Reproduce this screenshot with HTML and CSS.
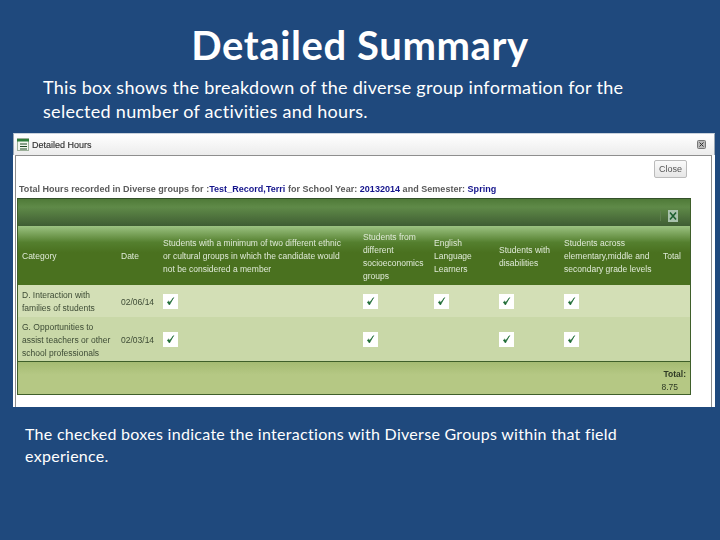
FILE: index.html
```
<!DOCTYPE html>
<html lang="en">
<head>
<meta charset="utf-8">
<title>Detailed Summary</title>
<link rel="stylesheet" href="styles.css">
</head>
<body>
<svg class="defs" width="0" height="0" aria-hidden="true"><symbol id="tick" viewBox="0 0 15 15"><path d="M4.4 8.2 6.4 11 10.6 3.6 6.9 8.4 5.6 7.2z" fill="#1c6a33" stroke="#1c6a33" stroke-width=".7"/></symbol></svg>
<h1 class="title">Detailed Summary</h1>
<p class="intro">This box shows the breakdown of the diverse group information for the selected number of activities and hours.</p>
<section class="shot">
  <header class="titlebar">
    <svg class="app-icon" width="14" height="14" viewBox="0 0 14 14"><rect x=".5" y=".5" width="11" height="12" fill="#f2f6ee" stroke="#9db09a"/><path d="M0 1h12v2.5H0z" fill="#2f7d3a"/><path d="M3 6h7M3 8.5h7M3 11h7" stroke="#1f4a25"/></svg>
    <span class="window-name">Detailed Hours</span>
    <svg class="x-icon" width="9" height="9" viewBox="0 0 9 9"><rect x=".5" y=".5" width="8" height="8" rx="1" fill="#b9b9b9" stroke="#777"/><path d="M2.5 2.5l4 4M6.5 2.5l-4 4" stroke="#333"/></svg>
  </header>
  <div class="content">
    <div class="close-row"><button class="close">Close</button></div>
    <div class="summary">Total Hours recorded in Diverse groups for :<b>Test_Record,Terri</b> for School Year: <b>20132014</b> and Semester: <b>Spring</b></div>
    <div class="grid-wrap">
      <div class="toolbar">
        <span class="sep"></span>
        <svg width="10" height="12" viewBox="0 0 10 12"><rect width="10" height="12" fill="#a9c2ad"/><path d="M2 2.5l6 7M8 2.5l-6 7" stroke="#1d5f30" stroke-width="1.6"/></svg>
      </div>
      <div class="row head">
        <div>Category</div><div>Date</div>
        <div class="wide">Students with a minimum of two different ethnic or cultural groups in which the candidate would not be considered a member</div>
        <div>Students from different socioeconomics groups</div>
        <div>English Language Learners</div>
        <div>Students with disabilities</div>
        <div>Students across elementary,middle and secondary grade levels</div>
        <div>Total</div>
      </div>
      <div class="row body r1">
        <div>D. Interaction with families of students</div><div>02/06/14</div>
        <div><svg class="box"><use href="#tick"/></svg></div>
        <div><svg class="box"><use href="#tick"/></svg></div>
        <div><svg class="box"><use href="#tick"/></svg></div>
        <div><svg class="box"><use href="#tick"/></svg></div>
        <div><svg class="box"><use href="#tick"/></svg></div>
        <div></div>
      </div>
      <div class="row body r2">
        <div>G. Opportunities to assist teachers or other school professionals</div><div>02/03/14</div>
        <div><svg class="box"><use href="#tick"/></svg></div>
        <div><svg class="box"><use href="#tick"/></svg></div>
        <div></div>
        <div><svg class="box"><use href="#tick"/></svg></div>
        <div><svg class="box"><use href="#tick"/></svg></div>
        <div></div>
      </div>
      <div class="foot"><b>Total:</b><span>8.75</span></div>
    </div>
  </div>
</section>
<p class="note">The checked boxes indicate the interactions with Diverse Groups within that field experience.</p>
</body>
</html>
```
FILE: styles.css
```
* { box-sizing: border-box; }
html, body { margin: 0; padding: 0; }
body {
  width: 720px;
  height: 540px;
  overflow: hidden;
  background: #1f497d;
  color: #fff;
  font-family: Lato, "Open Sans", sans-serif;
  padding-top: 24px;
}
.defs { display: block; height: 0; }
.title {
  margin: 0;
  height: 40px;
  font-size: 40px;
  line-height: 42px;
  font-weight: 700;
  letter-spacing: .6px;
  text-align: center;
}
.intro {
  margin: 11px 0 0 43px;
  width: 600px;
  font-size: 18px;
  line-height: 24px;
  letter-spacing: .29px;
}
.shot {
  margin: 10px 0 0 13px;
  width: 702px;
  height: 274px;
  background: #fff;
  color: #444;
  font-family: "Liberation Sans", sans-serif;
  display: flex;
  flex-direction: column;
  filter: blur(.4px);
}
.titlebar {
  height: 22px;
  flex: none;
  display: flex;
  align-items: center;
  padding: 0 8px 0 3px;
  background: linear-gradient(#fff, #ececec);
  border-left: 1px solid #9aa7b5;
  border-right: 1px solid #9aa7b5;
  border-top: 1px solid #c9d2dc;
}
.app-icon { margin-right: 1px; flex: none; }
.window-name { font-size: 9px; color: #333; -webkit-text-stroke: .15px #333; flex: 1; }
.content {
  flex: 1;
  margin: 0 3px 0 2px;
  padding: 0 0 0 1px;
  border: 1px solid #8e8e8e;
  border-bottom: 0;
  background: #fff;
}
.close-row { display: flex; justify-content: flex-end; height: 26px; padding: 4px 24px 0 0; }
.close {
  width: 33px;
  height: 18px;
  padding: 0;
  font: 9px "Liberation Sans", sans-serif;
  color: #555;
  background: linear-gradient(#fafafa, #e6e6e6);
  border: 1px solid #bbb;
  border-radius: 2px;
}
.summary {
  height: 16px;
  padding-left: 2px;
  font-size: 9px;
  line-height: 14px;
  font-weight: 700;
  color: #5a5a5a;
  letter-spacing: .03px;
  white-space: nowrap;
}
.summary b { color: #14148c; }
.grid-wrap { width: 674px; border: 1px solid #3f5f2a; border-top-color: #33502a; }
.toolbar {
  height: 27px;
  display: flex;
  align-items: center;
  justify-content: flex-end;
  gap: 7px;
  padding: 7px 12px 0 0;
  background: linear-gradient(#4f7a38, #5f8a48 30%, #3f5d33);
}
.sep { width: 1px; height: 10px; background: #5f7f4f; }
.row {
  display: grid;
  grid-template-columns: 98px 42px 200px 71px 65px 65px 99px 32px;
  font-size: 8.5px;
  line-height: 13px;
}
.row > div { padding-left: 4px; display: flex; align-items: center; }
.row > div:nth-child(n+2) { padding-left: 5px; }
.head {
  height: 59px;
  padding-top: 2px;
  color: #e0ead8;
  background: linear-gradient(#9cc382, #547f2e 28%, #4a711f 45%);
}
.head > div { padding-right: 2px; }
.head > .wide { padding-right: 12px; }
.body { color: #3c4a34; }
.r1 { height: 32px; padding-top: 2px; background: #d3dfb6; }
.r2 { height: 45px; padding-top: 2px; background: #c9d8a8; border-bottom: 1px solid #3f5f2a; }
.box { width: 15px; height: 15px; background: #fff; display: block; }
.r1 .box { margin-top: -1px; }
.r2 .box { margin-top: -2px; }
.foot {
  height: 32px;
  background: linear-gradient(#a5bb72, #b5c884 40%);
  display: flex;
  flex-direction: column;
  align-items: flex-end;
  padding: 6px 4px 0 0;
  font-size: 8.5px;
  line-height: 13px;
  color: #2f3a25;
}
.foot span { margin-right: 8px; }
.note {
  margin: 16px 0 0 25px;
  width: 640px;
  font-size: 16px;
  line-height: 22px;
  letter-spacing: .29px;
}
```
